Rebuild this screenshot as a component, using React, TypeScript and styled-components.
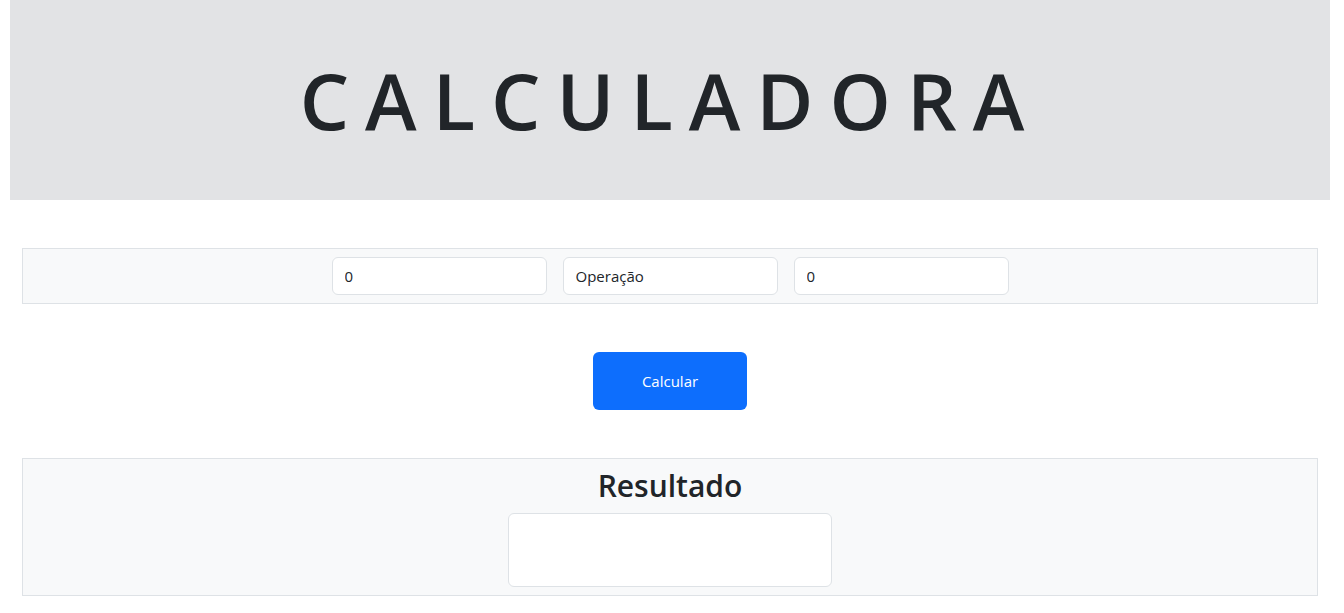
import React from "react";
import styled, { createGlobalStyle } from "styled-components";

const Global = createGlobalStyle`
  html, body { margin: 0; padding: 0; background: #fff; }
  body {
    font-family: "Open Sans", "Noto Sans", Arial, sans-serif;
    color: #212529;
    font-size: 16px;
  }
  * { box-sizing: border-box; }
`;

const Page = styled.div`
  width: 1340px;
  padding: 0 10px;
`;

const Header = styled.header`
  height: 200px;
  background: #e2e3e5;
  display: flex;
  align-items: center;
  justify-content: center;
`;

const Title = styled.h1`
  margin: 0;
  font-size: 78px;
  font-weight: 600;
  letter-spacing: 16px;
  color: #212529;
  line-height: 1;
`;

const Panel = styled.section<{ $mt: number }>`
  margin: ${(p) => p.$mt}px 12px 0;
  background: #f8f9fa;
  border: 1px solid #dee2e6;
  padding: 8px;
  display: flex;
  flex-direction: column;
  align-items: center;
`;

const InputRow = styled.div`
  display: flex;
  justify-content: center;
  gap: 16px;
`;

const Field = styled.input`
  width: 215px;
  height: 38px;
  padding: 6px 12px;
  font-family: inherit;
  font-size: 15px;
  color: #212529;
  background: #fff;
  border: 1px solid #dee2e6;
  border-radius: 6px;
  outline: none;
`;

const ButtonRow = styled.div`
  display: flex;
  justify-content: center;
  margin-top: 48px;
`;

const Button = styled.button`
  width: 154px;
  height: 58px;
  background: #0d6efd;
  color: #fff;
  border: none;
  border-radius: 6px;
  font-family: inherit;
  font-size: 15px;
  cursor: pointer;
`;

const ResultTitle = styled.h2`
  margin: 0 0 8px;
  font-size: 30px;
  font-weight: 600;
  line-height: 38px;
  color: #212529;
`;

const ResultBox = styled.div`
  width: 324px;
  height: 74px;
  background: #fff;
  border: 1px solid #dee2e6;
  border-radius: 6px;
`;

export default function App() {
  return (
    <Page>
      <Global />
      <Header>
        <Title>CALCULADORA</Title>
      </Header>
      <Panel $mt={48}>
        <InputRow>
          <Field defaultValue="0" />
          <Field defaultValue="Operação" />
          <Field defaultValue="0" />
        </InputRow>
      </Panel>
      <ButtonRow>
        <Button>Calcular</Button>
      </ButtonRow>
      <Panel $mt={48}>
        <ResultTitle>Resultado</ResultTitle>
        <ResultBox />
      </Panel>
    </Page>
  );
}
